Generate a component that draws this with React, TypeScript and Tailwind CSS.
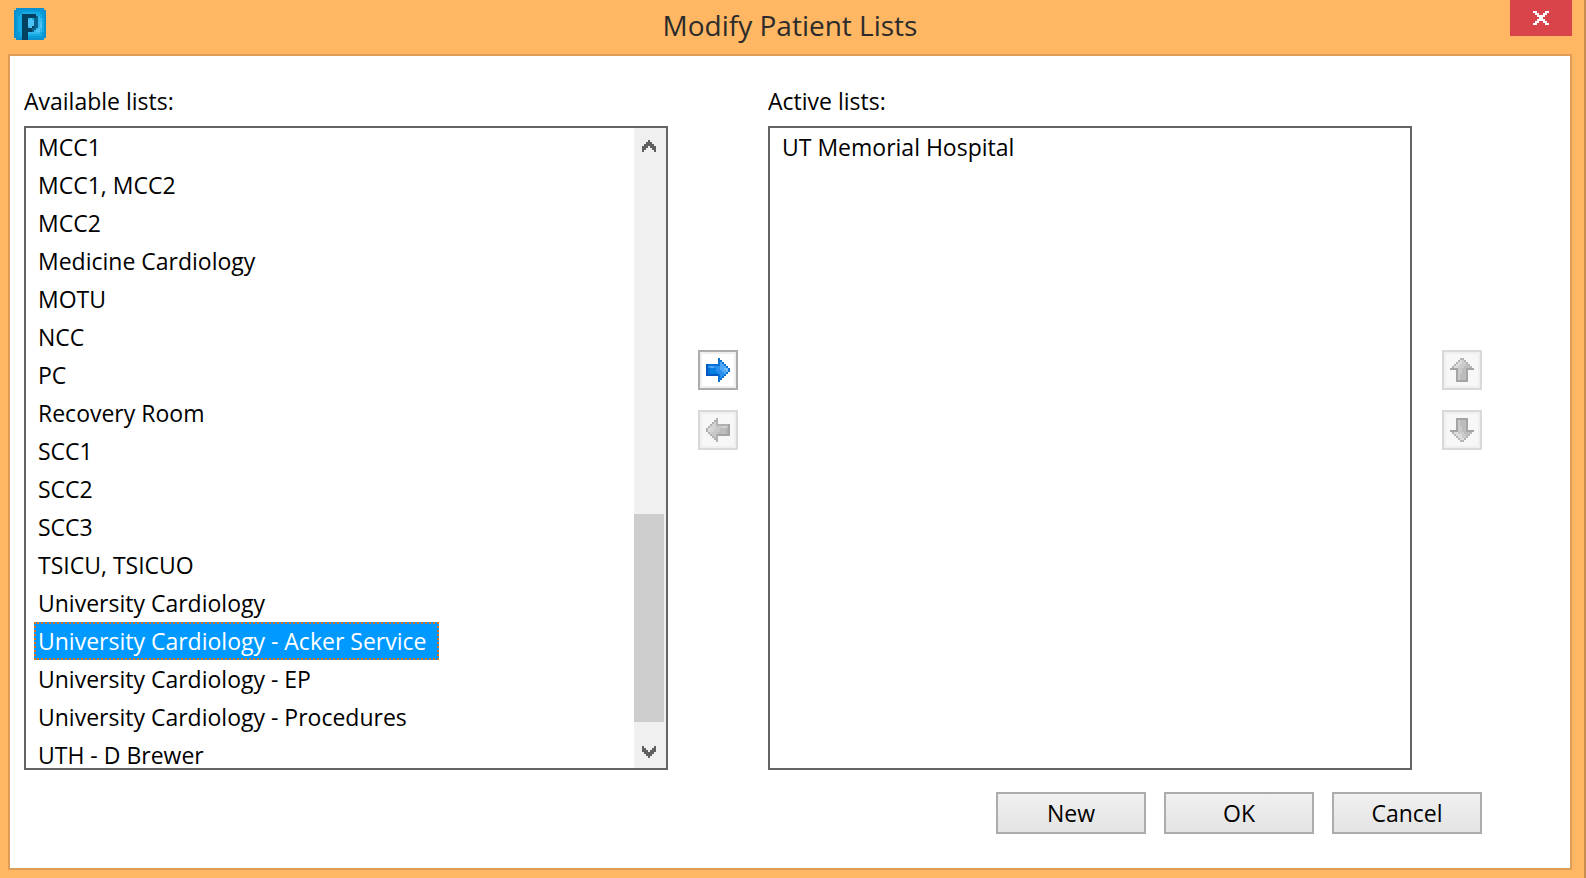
import { useState } from "react";

const AVAILABLE = [
  "MCC1",
  "MCC1, MCC2",
  "MCC2",
  "Medicine Cardiology",
  "MOTU",
  "NCC",
  "PC",
  "Recovery Room",
  "SCC1",
  "SCC2",
  "SCC3",
  "TSICU, TSICUO",
  "University Cardiology",
  "University Cardiology - Acker Service",
  "University Cardiology - EP",
  "University Cardiology - Procedures",
  "UTH - D Brewer",
];

const ACTIVE = ["UT Memorial Hospital"];

type Palette = Record<string, string>;

const LOGO = [
  ".nnnnnnnnnnnnnn.",
  "nnoooooooooooonn",
  "nooopppppppppoon",
  "noopDDDDDDDpppon",
  "noppDDDDDDDEqpon",
  "noppDDDqrpEEqqpn",
  "noppDDDrrrEEqqpn",
  "noppDDDrrrEEqrpn",
  "noppDDDrrrEEqrpn",
  "noppDDDqrDEEqrpn",
  "noppDDDDDEEqrqpn",
  "noppDDDDDEqrrqpn",
  "noopDDDqqqqqqpon",
  "noopDDDpppppppon",
  "nnooDDDoooooooon",
  ".nnnDDDnnnnnnnn.",
];
const LOGO_COLORS: Palette = {
  n: "#0b90cf",
  o: "#0a9ad8",
  p: "#16aae4",
  q: "#33b8ee",
  r: "#4cc3f4",
  D: "#04405f",
  E: "#08618c",
};

const RIGHT = [
  "......a.....",
  "......aa....",
  "......aca...",
  "eaaaaaacca..",
  "ebccbbbccca.",
  "eafffbbccdda",
  "eafffbbbccda",
  "eaffffbbbca.",
  "eeeeeeabba..",
  "......aba...",
  "......aa....",
  "......a.....",
];
const LEFT = RIGHT.map((row) => [...row].reverse().join(""));
const UP = [
  ".....gg.....",
  "....glhg....",
  "...gllhhg...",
  "..gllhhhmg..",
  ".gllhhhmmmg.",
  "eeeehhmmeeee",
  "...ehhmme...",
  "...ehhmme...",
  "...ehmmme...",
  "...ehmmme...",
  "...ehmmme...",
  "...eeeeee...",
];
const DOWN = [
  "...eeeeee...",
  "...ehmmme...",
  "...ehmmme...",
  "...ehmmme...",
  "...ehhmme...",
  "...ehhmme...",
  "eeeehhmmeeee",
  ".gllhhhmmmg.",
  "..glllhhmg..",
  "...gllhhg...",
  "....gllg....",
  ".....gg.....",
];
const BLUE: Palette = {
  a: "#0573d6",
  b: "#2a90ec",
  c: "#50a8f6",
  d: "#74bdfb",
  e: "#0459c0",
  f: "#057fe2",
};
const GREY: Palette = {
  a: "#b0b0b0",
  b: "#c8c8c8",
  c: "#d2d2d2",
  d: "#dadada",
  e: "#a4a4a4",
  f: "#bcbcbc",
  g: "#b4b4b4",
  h: "#cbcbcb",
  l: "#dcdcdc",
  m: "#bcbcbc",
};

const CHEVRON_UP = ["...x...", "..xxx..", ".xxxxx.", "xxx.xxx", "xx...xx", "x.....x"];
const CHEVRON_DOWN = [...CHEVRON_UP].reverse();
const CLOSE = ["xx....xx", ".xx..xx.", "..xxxx..", "...xx...", "..xxxx..", ".xx..xx.", "xx....xx"];

/** Bitmap icon: one character per cell, each cell two pixels wide. */
function PixelIcon({ rows, colors }: { rows: string[]; colors: Palette }) {
  const w = rows[0].length;
  const h = rows.length;
  return (
    <svg width={w * 2} height={h * 2} viewBox={`0 0 ${w} ${h}`} shapeRendering="crispEdges" aria-hidden="true">
      {rows.flatMap((row, y) =>
        [...row].map((c, x) =>
          colors[c] ? <rect key={`${x}-${y}`} x={x} y={y} width={1} height={1} fill={colors[c]} /> : null
        )
      )}
    </svg>
  );
}

function MoveButton({ label, rows, disabled }: { label: string; rows: string[]; disabled?: boolean }) {
  return (
    <button
      aria-label={label}
      disabled={disabled}
      className={`flex size-10 items-center justify-center border-2 ring-2 ring-inset ${
        disabled ? "border-[#d9d9d9] bg-[#f7f7f7] ring-[#efefef]" : "border-[#acacac] bg-white ring-[#efefef]"
      }`}
    >
      <PixelIcon rows={rows} colors={disabled ? GREY : BLUE} />
    </button>
  );
}

function Scrollbar() {
  return (
    <div className="flex w-8 shrink-0 flex-col bg-[#f0f0f0] pr-[2px]">
      <button aria-label="Scroll up" className="flex h-9 items-center justify-center">
        <PixelIcon rows={CHEVRON_UP} colors={{ x: "#606060" }} />
      </button>
      <div className="flex flex-1 flex-col justify-end pb-[14px]">
        <div className="h-52 bg-[#cdcdcd]" />
      </div>
      <button aria-label="Scroll down" className="flex h-8 items-center justify-center">
        <PixelIcon rows={CHEVRON_DOWN} colors={{ x: "#606060" }} />
      </button>
    </div>
  );
}

interface ListPaneProps {
  id: string;
  label: string;
  items: string[];
  selected?: string;
  onSelect?: (item: string) => void;
  scroll?: boolean;
}

function ListPane({ id, label, items, selected, onSelect, scroll }: ListPaneProps) {
  return (
    <section className="min-w-0 flex-1">
      <h2 id={id} className="mb-1.5 leading-[38px]">
        {label}
      </h2>
      <div className="flex h-[644px] border-2 border-[#646464] bg-white">
        <ul role="listbox" aria-labelledby={id} className="min-w-0 flex-1 overflow-hidden px-2">
          {items.map((item) => (
            <li
              key={item}
              role="option"
              aria-selected={item === selected}
              onClick={() => onSelect?.(item)}
              className={`w-fit cursor-default whitespace-nowrap border-2 pl-[2px] pr-[11px] leading-[34px] ${
                item === selected
                  ? "border-dotted border-[#e0701a] bg-[#0099ff] text-white"
                  : "border-transparent"
              }`}
            >
              {item}
            </li>
          ))}
        </ul>
        {scroll && <Scrollbar />}
      </div>
    </section>
  );
}

export default function App() {
  const [selected, setSelected] = useState("University Cardiology - Acker Service");

  return (
    <div className="flex min-h-screen flex-col border-r-2 border-[#c98d4d] bg-[#ffb763] pb-2 pl-2 pr-3 font-['Open_Sans',sans-serif] text-[23px] text-black">
      <header className="grid h-[54px] grid-cols-[62px_1fr_62px] items-start">
        <div className="pl-1.5 pt-2">
          <PixelIcon rows={LOGO} colors={LOGO_COLORS} />
        </div>
        <h1 className="text-center text-[28px] leading-[50px] text-[#2b2b2b]">Modify Patient Lists</h1>
        <button aria-label="Close" className="flex h-9 items-center justify-center bg-[#d9444a]">
          <PixelIcon rows={CLOSE} colors={{ x: "#ffffff" }} />
        </button>
      </header>

      <main className="flex-1 border-2 border-[#df9d56] bg-white pb-[34px] pl-[14px] pr-[88px] pt-[26px]">
        <div className="flex gap-[30px]">
          <ListPane
            id="available-lists"
            label="Available lists:"
            items={AVAILABLE}
            selected={selected}
            onSelect={setSelected}
            scroll
          />
          <div className="flex flex-col gap-5 pt-[268px]">
            <MoveButton label="Add to active lists" rows={RIGHT} />
            <MoveButton label="Remove from active lists" rows={LEFT} disabled />
          </div>
          <ListPane id="active-lists" label="Active lists:" items={ACTIVE} />
          <div className="flex flex-col gap-5 pt-[268px]">
            <MoveButton label="Move up" rows={UP} disabled />
            <MoveButton label="Move down" rows={DOWN} disabled />
          </div>
        </div>

        <footer className="mt-[22px] flex justify-end gap-[18px]">
          {["New", "OK", "Cancel"].map((name) => (
            <button
              key={name}
              className="h-[42px] w-[150px] border-2 border-[#acacac] bg-linear-to-b from-[#f0f0f0] to-[#e4e4e4] leading-[38px]"
            >
              {name}
            </button>
          ))}
        </footer>
      </main>
    </div>
  );
}
